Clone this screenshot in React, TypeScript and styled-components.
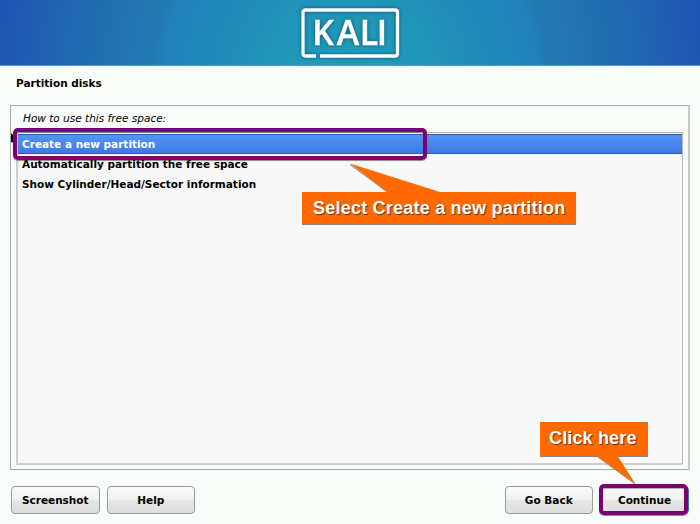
import React from "react";
import styled, { createGlobalStyle } from "styled-components";

const GlobalStyle = createGlobalStyle`
  *, *::before, *::after { box-sizing: border-box; }
  body { margin: 0; background: #f8fdf9; overflow: hidden; }
`;

const Screen = styled.div`
  position: relative;
  display: flex;
  flex-direction: column;
  width: 700px;
  height: 524px;
  background: #f8fdf9;
  color: #000;
  font-family: "DejaVu Sans", sans-serif;
  font-size: 10.5px;
  overflow: hidden;
`;

const Banner = styled.header`
  flex: none;
  display: flex;
  justify-content: center;
  height: 66px;
  padding-top: 7px;
  border-bottom: 1px solid #4f9fc9;
  background: radial-gradient(ellipse 355px 390px at 350px 85px, #209eb9 0%, #2096ba 22%, #2180b9 53%, #217bb0 56%, #1f55b2 100%);
`;

const Logo = styled.svg`
  display: block;
  filter: drop-shadow(0 0 2px rgba(0, 45, 75, 0.6));
`;

const Title = styled.h1`
  flex: none;
  height: 39px;
  margin: 0;
  padding: 10px 0 0 16px;
  font-size: 10.5px;
  line-height: 14px;
`;

const Panel = styled.main`
  flex: none;
  display: flex;
  flex-direction: column;
  width: 680px;
  height: 365px;
  margin-left: 10px;
  padding: 5px 5px 4px;
  border: 1px solid #a9aaa9;
  border-right: 2px solid #c9cbc9;
`;

const Question = styled.div`
  flex: none;
  height: 21px;
  padding-left: 7px;
  font-style: italic;
  line-height: 15px;
`;

const Options = styled.div`
  flex: 1;
  padding-top: 1px;
  border: 1px solid #b5b6b5;
  border-left: 2px solid #cdcecd;
  border-bottom: 2px solid #cdcecd;
  background: #f8f8f8;
`;

const Option = styled.div<{ $selected?: boolean }>`
  height: 20px;
  padding-left: 4px;
  font-weight: bold;
  line-height: ${(p) => (p.$selected ? "18px" : "20px")};
  color: ${(p) => (p.$selected ? "#fff" : "#000")};
  background: ${(p) => (p.$selected ? "linear-gradient(#5594f4, #3d79e5)" : "none")};
  border: solid #285bb5;
  border-width: ${(p) => (p.$selected ? "1px 0" : "0")};
`;

const Footer = styled.footer`
  display: flex;
  gap: 7px;
  padding: 16px 11px 0 11px;
`;

const Spacer = styled.div`
  flex: 1;
`;

const Button = styled.button<{ $primary?: boolean }>`
  width: ${(p) => (p.$primary ? 89 : 88.5)}px;
  height: 28px;
  padding: 0;
  border: 1px solid ${(p) => (p.$primary ? "#3b78ce" : "#999b99")};
  border-radius: 4px;
  background: linear-gradient(#fafafa 0%, #f0f0f0 48%, #e5e5e5 52%, #dedede 100%);
  color: #000;
  font: bold 10.5px "DejaVu Sans", sans-serif;
`;

const Overlay = styled.svg`
  position: absolute;
  inset: 0;
  pointer-events: none;
`;

const Highlight = styled.div<{ $x: number; $y: number; $w: number; $h: number }>`
  position: absolute;
  left: ${(p) => p.$x}px;
  top: ${(p) => p.$y}px;
  width: ${(p) => p.$w}px;
  height: ${(p) => p.$h}px;
  border: 4px solid #7b0070;
  border-radius: 5px;
  box-shadow: 0 1px 1px rgba(0, 0, 0, 0.45), inset 0 1px 1px rgba(0, 0, 0, 0.3);
`;

const Callout = styled.div<{ $x: number; $y: number; $w: number; $h: number; $indent: number; $spacing: number }>`
  position: absolute;
  left: ${(p) => p.$x}px;
  top: ${(p) => p.$y}px;
  width: ${(p) => p.$w}px;
  height: ${(p) => p.$h}px;
  padding-left: ${(p) => p.$indent}px;
  background: #ff6a00;
  box-shadow: 0 1px 0 #8c8580;
  color: #fff;
  font: bold 18px/32px "Liberation Sans", sans-serif;
  letter-spacing: ${(p) => p.$spacing}px;
  text-shadow: 1px 1px 1px rgba(70, 35, 10, 0.8);
  white-space: nowrap;
`;

const Cursor = styled.div`
  position: absolute;
  left: 11px;
  top: 133px;
  width: 4px;
  height: 10px;
  background: #000;
  clip-path: polygon(0 0, 100% 40%, 100% 100%, 0 90%);
`;

export default function App() {
  return (
    <Screen>
      <GlobalStyle />
      <Banner>
        <Logo width="100" height="53" viewBox="0 0 100 53" fill="none" stroke="#fafffc">
          <path d="M16 49H5.500Q3 49 3 46.500V5.500Q3 3 5.500 3H95Q97.500 3 97.500 5.500V46.500Q97.500 49 95 49H20" strokeWidth="3.3" />
          <text x="12.2 36.7 59.8 76.8" y="38.200" fill="#fff" stroke="#fff" strokeWidth=".4" fontFamily="Open Sans, sans-serif" fontSize="34" fontWeight="600">KALI</text>
        </Logo>
      </Banner>
      <Title>Partition disks</Title>
      <Panel>
        <Question>How to use this free space:</Question>
        <Options>
          <Option $selected>Create a new partition</Option>
          <Option>Automatically partition the free space</Option>
          <Option>Show Cylinder/Head/Sector information</Option>
        </Options>
      </Panel>
      <Footer>
        <Button>Screenshot</Button>
        <Button>Help</Button>
        <Spacer />
        <Button>Go Back</Button>
        <Button $primary>Continue</Button>
      </Footer>
      <Cursor />
      <Highlight $x={13} $y={128} $w={414} $h={32} />
      <Highlight $x={599} $y={484} $w={89} $h={31} />
      <Callout $x={302} $y={192} $w={274} $h={32} $indent={11} $spacing={0.22}>Select Create a new partition</Callout>
      <Callout $x={540} $y={422} $w={108} $h={34} $indent={9} $spacing={0.15}>Click here</Callout>
      <Overlay width="700" height="524" viewBox="0 0 700 524">
        <path d="M350 164.500L388 192.500" stroke="#8c8580" />
        <path d="M350 163.500L440 192V193H388.500Z" fill="#ff6a00" />
        <path d="M598 457L635 484" stroke="#8c8580" />
        <path d="M599 455H617L635.500 484L598 457Z" fill="#ff6a00" />
      </Overlay>
    </Screen>
  );
}
